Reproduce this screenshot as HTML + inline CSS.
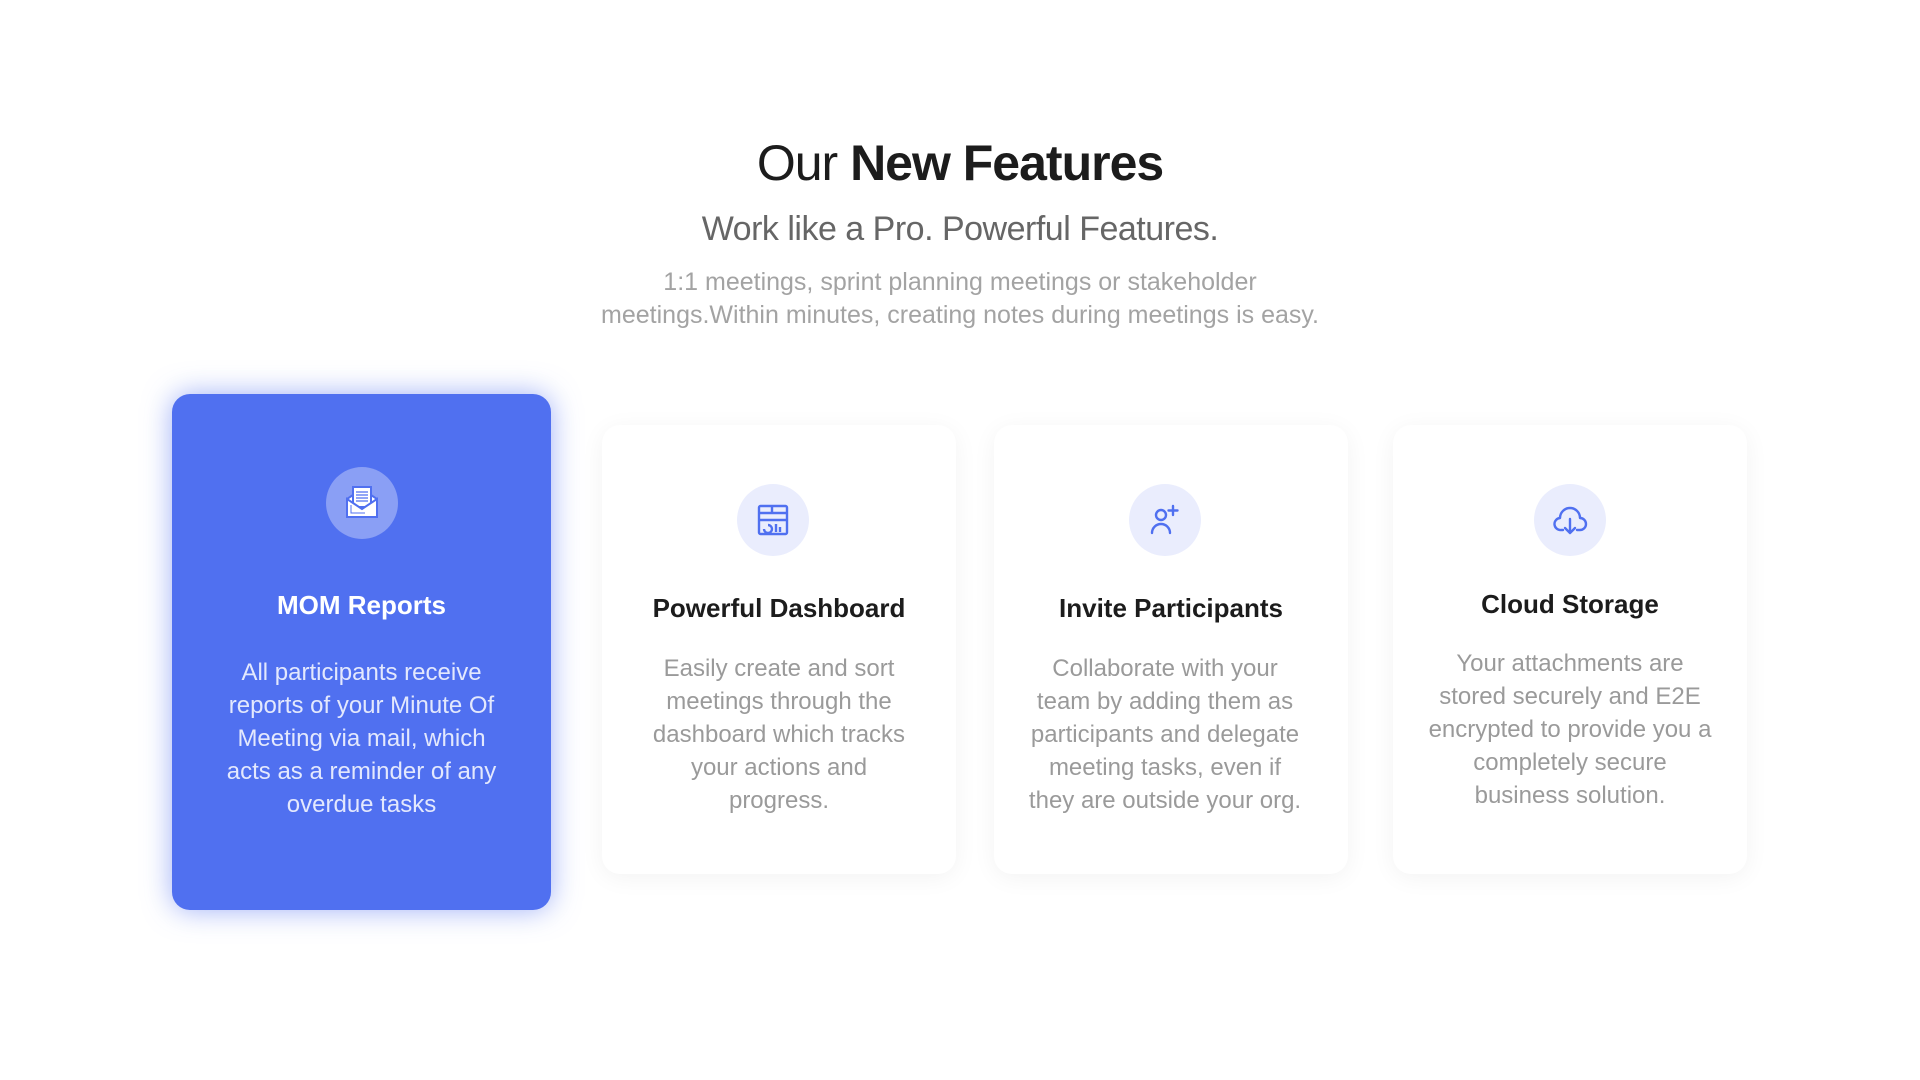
<!DOCTYPE html>
<html><head><meta charset="utf-8"><style>
*{margin:0;padding:0;box-sizing:border-box}
body{width:1920px;height:1080px;background:#fff;font-family:"Liberation Sans",sans-serif;position:relative;overflow:hidden}
.t{position:absolute;left:0;width:1920px;text-align:center}
.sub{top:210px;font-size:34px;color:#666;letter-spacing:-0.5px}
.p{top:266px;font-size:25px;line-height:33px;color:#a3a3a3}
.card{position:absolute;border-radius:18px;background:#fff;box-shadow:0 4px 24px rgba(0,0,0,0.05);text-align:center}
.card.blue{background:#5070f0;box-shadow:0 0 28px rgba(80,112,240,0.55)}
.ic{position:absolute;width:72px;height:72px;border-radius:50%;background:#eaedfd;left:50%;margin-left:-36px}
.blue .ic{background:#8a9ff5}
.ic svg{position:absolute;left:16px;top:16px}
.ct{position:absolute;left:0;right:0;font-size:26px;font-weight:700;color:#1c1c1c}
.blue .ct{color:#fff}
.cb{position:absolute;left:0;right:0;font-size:24px;line-height:33px;color:#9a9a9a;white-space:nowrap}
.blue .cb{color:#e3e8fd}
</style></head><body>
<div class="t" style="top:134px;font-size:50px;color:#1c1c1c;letter-spacing:-1px">Our <b>New Features</b></div>
<div class="t sub">Work like a Pro. Powerful Features.</div>
<div class="t p">1:1 meetings, sprint planning meetings or stakeholder<br>meetings.Within minutes, creating notes during meetings is easy.</div>

<div class="card blue" style="left:172px;top:394px;width:379px;height:516px">
 <div class="ic" style="top:73px"><svg width="40" height="40" viewBox="0 0 40 40">
  <path d="M5 16 L20 6 L35 16 V34 H5 Z" fill="#fff" stroke="#5070f0" stroke-width="2"/>
  <rect x="11" y="4" width="18" height="20" fill="#fff" stroke="#5070f0" stroke-width="2"/>
  <path d="M14 9h12M14 12h12M14 15h12M14 18h12" stroke="#5070f0" stroke-width="1.2"/>
  <path d="M5 16 L20 26 L35 16 V34 H5 Z" fill="#fff" stroke="#5070f0" stroke-width="2"/>
  <path d="M9 22 V30 H23" fill="none" stroke="#5070f0" stroke-width="1"/>
 </svg></div>
 <div class="ct" style="top:196px">MOM Reports</div>
 <div class="cb" style="top:262px">All participants receive<br>reports of your Minute Of<br>Meeting via mail, which<br>acts as a reminder of any<br>overdue tasks</div>
</div>

<div class="card" style="left:602px;top:425px;width:354px;height:449px">
 <div class="ic" style="top:59px;margin-left:-42px"><svg width="40" height="40" viewBox="0 0 40 40" fill="none" stroke="#5070f0" stroke-width="2.4">
  <rect x="6" y="6" width="28" height="28" rx="1.5"/><path d="M6 13h28M6 20h28M19 6v7"/>
  <path d="M15 25 a4 4 0 1 1 -4 4" /><path d="M23 24v8M27 27v5"/>
 </svg></div>
 <div class="ct" style="top:168px">Powerful Dashboard</div>
 <div class="cb" style="top:227px">Easily create and sort<br>meetings through the<br>dashboard which tracks<br>your actions and<br>progress.</div>
</div>

<div class="card" style="left:994px;top:425px;width:354px;height:449px">
 <div class="ic" style="top:59px;margin-left:-42px"><svg width="40" height="40" viewBox="0 0 40 40" fill="none" stroke="#5070f0" stroke-width="2.4" stroke-linecap="round">
  <circle cx="16" cy="15" r="5"/><path d="M7 33 a9 9 0 0 1 18 0"/><path d="M28 6v9M23.5 10.5h9"/>
 </svg></div>
 <div class="ct" style="top:168px">Invite Participants</div>
 <div class="cb" style="top:227px;margin-left:-12px">Collaborate with your<br>team by adding them as<br>participants and delegate<br>meeting tasks, even if<br>they are outside your org.</div>
</div>

<div class="card" style="left:1393px;top:425px;width:354px;height:449px">
 <div class="ic" style="top:59px"><svg width="40" height="40" viewBox="0 0 40 40" fill="none" stroke="#5070f0" stroke-width="2.4" stroke-linecap="round" stroke-linejoin="round">
  <path d="M13 30 H11 a6 6 0 0 1 -1 -12 a10 10 0 0 1 20 0 a6 6 0 0 1 0 12 H27"/>
  <path d="M20 19v14M15 28l5 5 5-5"/>
 </svg></div>
 <div class="ct" style="top:164px">Cloud Storage</div>
 <div class="cb" style="top:222px">Your attachments are<br>stored securely and E2E<br>encrypted to provide you a<br>completely secure<br>business solution.</div>
</div>
</body></html>
